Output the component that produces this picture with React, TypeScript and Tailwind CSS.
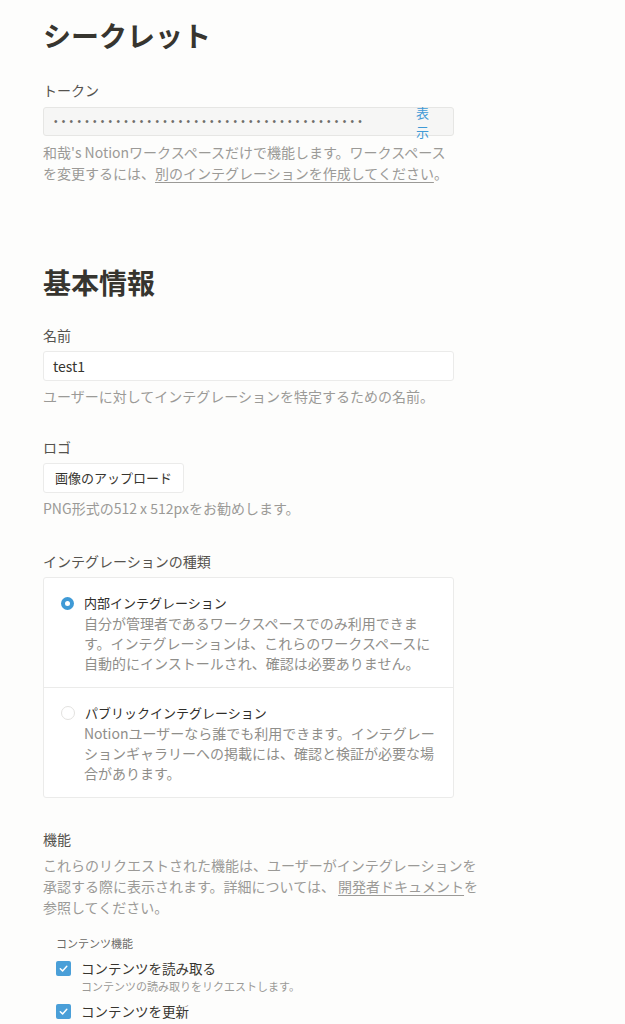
import React from "react";

const FONT = { fontFamily: '"Noto Sans CJK JP", "Noto Sans", sans-serif' };

function Label({ children }: { children: React.ReactNode }) {
  return <div className="text-[14px] leading-[20px] text-[#55534e]">{children}</div>;
}

function Helper({ children, className = "" }: { children: React.ReactNode; className?: string }) {
  return <div className={`text-[14px] leading-[21px] text-[#9b9a97] ${className}`}>{children}</div>;
}

function Radio({ checked }: { checked: boolean }) {
  return checked ? (
    <span className="flex h-[13px] w-[13px] shrink-0 items-center justify-center rounded-full bg-[#3f9ad6]">
      <span className="h-[5px] w-[5px] rounded-full bg-white" />
    </span>
  ) : (
    <span className="h-[14px] w-[14px] shrink-0 rounded-full border border-[#e3e2e0] bg-white" />
  );
}

function IntegrationOption({
  checked,
  title,
  children,
}: {
  checked: boolean;
  title: string;
  children: React.ReactNode;
}) {
  return (
    <div className="pl-[17px] pr-[12px] pt-[15px] pb-[14px]">
      <div className="flex items-center gap-[10px]">
        <Radio checked={checked} />
        <span className="text-[13px] leading-[20px] text-[#2f2e2a]">{title}</span>
      </div>
      <div className="pl-[23px] text-[14px] leading-[20px] text-[#8f8e8a]">{children}</div>
    </div>
  );
}

function CapabilityCheck({ title, sub }: { title: string; sub: string }) {
  return (
    <div className="mt-[7px]">
      <div className="flex items-center gap-[10px]">
        <span className="flex h-[15px] w-[15px] shrink-0 items-center justify-center rounded-[2px] bg-[#4a9fd8]">
          <svg width="11" height="11" viewBox="0 0 12 12" fill="none">
            <path d="M2.5 6.2 L5 8.6 L9.6 3.6" stroke="white" strokeWidth="1.6" strokeLinecap="round" strokeLinejoin="round" />
          </svg>
        </span>
        <span className="text-[13.5px] leading-[20px] text-[#37352f]">{title}</span>
      </div>
      <div className="pl-[25px] text-[11px] leading-[16px] text-[#9b9a97]">{sub}</div>
    </div>
  );
}

export default function App() {
  const dots = "•".repeat(40);

  return (
    <div className="min-h-screen overflow-hidden bg-[#fdfdfc] pl-[43px] pt-[17px]" style={FONT}>
      {/* シークレット */}
      <h1 className="text-[28px] leading-[36px] font-bold text-[#37352f]">シークレット</h1>

      <div className="mt-[27px]">
        <Label>トークン</Label>
      </div>
      <div className="mt-[7px] flex h-[29px] w-[411px] items-center rounded-[3px] border border-[#e6e6e4] bg-[#f6f6f5] pl-[10px] pr-[24px]">
        <span
          className="flex-1 text-[10px] tracking-[4.3px] text-[#6f6e6a]"
          style={{ fontFamily: '"Liberation Sans", sans-serif' }}
        >
          {dots}
        </span>
        <span className="w-[13px] text-[13px] leading-[19px] text-[#3f9ad6]">表示</span>
      </div>
      <Helper className="mt-[6px]">
        和哉's Notionワークスペースだけで機能します。ワークスペース
        <br />
        を変更するには、
        <span className="underline decoration-[#9b9a97] underline-offset-[3px]">別のインテグレーションを作成してください</span>。
      </Helper>

      {/* 基本情報 */}
      <h2 className="mt-[80px] text-[28px] leading-[36px] font-bold text-[#37352f]">基本情報</h2>

      <div className="mt-[25px]">
        <Label>名前</Label>
      </div>
      <div className="mt-[6px] flex h-[30px] w-[411px] items-center rounded-[3px] border border-[#ebebea] bg-white px-[9px] text-[14px] text-[#37352f]">
        test1
      </div>
      <Helper className="mt-[5px]">ユーザーに対してインテグレーションを特定するための名前。</Helper>

      <div className="mt-[30px]">
        <Label>ロゴ</Label>
      </div>
      <button className="mt-[6px] flex h-[30px] w-[141px] items-center justify-center rounded-[3px] border border-[#ebebea] bg-white text-[13px] text-[#37352f]">
        画像のアップロード
      </button>
      <Helper className="mt-[5px]">PNG形式の512 x 512pxをお勧めします。</Helper>

      <div className="mt-[32px]">
        <Label>インテグレーションの種類</Label>
      </div>
      <div className="mt-[6px] w-[411px] rounded-[3px] border border-[#ebebea] bg-white">
        <IntegrationOption checked title="内部インテグレーション">
          自分が管理者であるワークスペースでのみ利用できま
          <br />
          す。インテグレーションは、これらのワークスペースに
          <br />
          自動的にインストールされ、確認は必要ありません。
        </IntegrationOption>
        <div className="h-px bg-[#ebebea]" />
        <IntegrationOption checked={false} title="パブリックインテグレーション">
          Notionユーザーなら誰でも利用できます。インテグレー
          <br />
          ションギャラリーへの掲載には、確認と検証が必要な場
          <br />
          合があります。
        </IntegrationOption>
      </div>

      {/* 機能 */}
      <div className="mt-[31px]">
        <Label>機能</Label>
      </div>
      <Helper className="mt-[6px] w-[450px]">
        これらのリクエストされた機能は、ユーザーがインテグレーションを
        <br />
        承認する際に表示されます。詳細については、{" "}
        <span className="underline decoration-[#9b9a97] underline-offset-[3px]">開発者ドキュメント</span>を
        <br />
        参照してください。
      </Helper>

      <div className="mt-[17px] pl-[13px]">
        <div className="text-[11px] leading-[16px] text-[#6b6a66]">コンテンツ機能</div>
        <CapabilityCheck title="コンテンツを読み取る" sub="コンテンツの読み取りをリクエストします。" />
        <CapabilityCheck title="コンテンツを更新" sub="既存のコンテンツの更新をリクエストします。" />
      </div>
    </div>
  );
}
